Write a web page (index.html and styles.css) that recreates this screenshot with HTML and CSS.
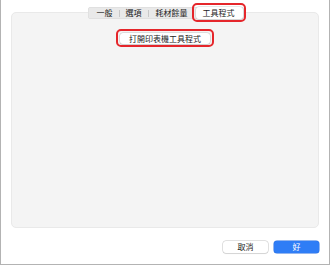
FILE: index.html
```html
<!DOCTYPE html>
<html lang="zh-Hant">
<head>
<meta charset="utf-8">
<link rel="stylesheet" href="styles.css">
</head>
<body>
<div class="window">
  <div class="tabs-row">
    <div class="tabs">
      <div class="tab first">一般</div>
      <div class="sep"></div>
      <div class="tab">選項</div>
      <div class="sep"></div>
      <div class="tab third">耗材餘量</div>
      <div class="tab-wrap">
        <div class="tab selected">工具程式</div>
        <div class="highlight"></div>
      </div>
    </div>
  </div>
  <div class="panel">
    <div class="btn-wrap">
      <button class="btn">打開印表機工具程式</button>
      <div class="highlight"></div>
    </div>
  </div>
  <div class="footer">
    <button class="btn foot">取消</button>
    <button class="btn foot primary">好</button>
  </div>
</div>
</body>
</html>
```

FILE: styles.css
```css
* { box-sizing: border-box; }
html, body { margin: 0; padding: 0; background: #fff; }
body {
  font-family: "Noto Sans CJK TC", "Noto Sans", sans-serif;
  font-size: 8px;
  color: #222;
}
.window {
  width: 330px;
  height: 265px;
  border: 1px solid #b3b3b3;
  border-top: none;
  padding: 0 10px;
  display: flex;
  flex-direction: column;
  background: #fff;
}
.tabs-row {
  display: flex;
  justify-content: center;
  margin-top: 7px;
  position: relative;
  z-index: 1;
  padding-left: 1px;
}
.tabs {
  display: flex;
  align-items: center;
  height: 12px;
  background: #e9e9e9;
  border-radius: 3px;
  box-shadow: inset 0 0 0 0.5px #d8d8d8;
}
.tab {
  height: 12px;
  line-height: 12px;
  padding: 0 6px;
  white-space: nowrap;
}
.tab.first { padding: 0 6px 0 9px; }
.tab.third { padding: 0 7px; }
.sep {
  width: 1px;
  height: 7px;
  background: #c8c8c8;
}
.tab-wrap {
  position: relative;
}
.tab.selected {
  background: #fff;
  border-radius: 3px;
  margin: 0 1px;
  padding: 0 8px 0 7px;
  box-shadow: 0 0 0 0.5px #cfcfcf, 0 1px 1px rgba(0,0,0,0.12);
}
.highlight {
  position: absolute;
  left: -4px;
  right: -4px;
  top: -4px;
  bottom: -3px;
  border: 2px solid #e5262b;
  border-radius: 5px;
  pointer-events: none;
}
.tab-wrap .highlight {
  left: -3px;
  right: -2px;
}
.panel {
  margin-top: -7px;
  height: 216px;
  background: #f4f4f4;
  border: 1px solid #e9e9e9;
  border-radius: 5px;
  display: flex;
  flex-direction: column;
  align-items: center;
  padding-top: 20px;
}
.btn-wrap {
  position: relative;
}
.btn {
  font-family: inherit;
  font-size: 8px;
  color: #222;
  background: #fff;
  border: none;
  border-radius: 3px;
  box-shadow: 0 0 0 0.5px #c4c4c4, 0 1px 1px rgba(0,0,0,0.1);
  height: 11px;
  line-height: 11px;
  padding: 0 9px;
  margin: 0;
  display: block;
  white-space: nowrap;
}
.footer {
  display: flex;
  justify-content: flex-end;
  gap: 6px;
  margin-top: 13px;
}
.btn.foot {
  width: 45px;
  height: 12px;
  line-height: 12px;
  padding: 0;
  text-align: center;
}
.btn.primary {
  background: #2f7df6;
  color: #fff;
  box-shadow: 0 0 0 0.5px #2a6fe0;
}
```
